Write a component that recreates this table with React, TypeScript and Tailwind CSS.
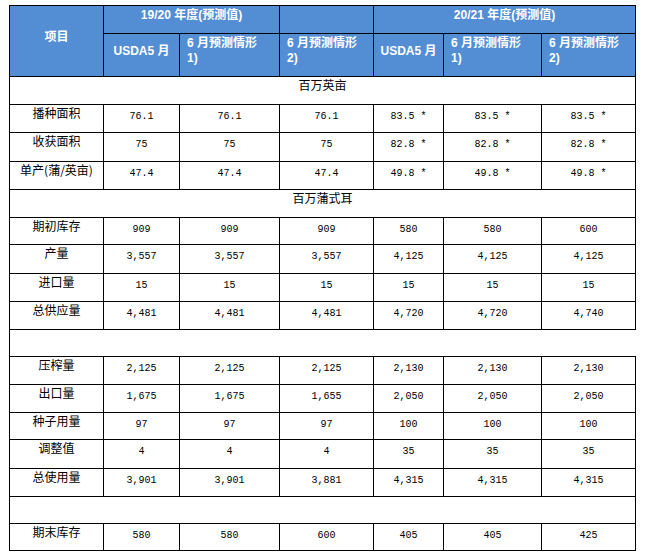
const head = "font-['Liberation_Sans','Noto_Sans_CJK_SC',sans-serif] font-bold text-[12px] leading-[15px] text-white"
const label = "font-['Noto_Sans_CJK_SC',sans-serif] text-[12px] leading-[16px] text-black"
const num = "font-['Liberation_Mono','DejaVu_Sans_Mono',monospace] text-[10px] leading-[16px] text-black"

type Row = { name: string; h: string; vals: string[] }

const acres: Row[] = [
  { name: '播种面积', h: 'h-[28px]', vals: ['76.1', '76.1', '76.1', '83.5 *', '83.5 *', '83.5 *'] },
  { name: '收获面积', h: 'h-[29px]', vals: ['75', '75', '75', '82.8 *', '82.8 *', '82.8 *'] },
  { name: '单产(蒲/英亩)', h: 'h-[28px]', vals: ['47.4', '47.4', '47.4', '49.8 *', '49.8 *', '49.8 *'] },
]

const supply: Row[] = [
  { name: '期初库存', h: 'h-[27px]', vals: ['909', '909', '909', '580', '580', '600'] },
  { name: '产量', h: 'h-[29px]', vals: ['3,557', '3,557', '3,557', '4,125', '4,125', '4,125'] },
  { name: '进口量', h: 'h-[28px]', vals: ['15', '15', '15', '15', '15', '15'] },
  { name: '总供应量', h: 'h-[28px]', vals: ['4,481', '4,481', '4,481', '4,720', '4,720', '4,740'] },
]

const usage: Row[] = [
  { name: '压榨量', h: 'h-[28px]', vals: ['2,125', '2,125', '2,125', '2,130', '2,130', '2,130'] },
  { name: '出口量', h: 'h-[28px]', vals: ['1,675', '1,675', '1,655', '2,050', '2,050', '2,050'] },
  { name: '种子用量', h: 'h-[27px]', vals: ['97', '97', '97', '100', '100', '100'] },
  { name: '调整值', h: 'h-[29px]', vals: ['4', '4', '4', '35', '35', '35'] },
  { name: '总使用量', h: 'h-[28px]', vals: ['3,901', '3,901', '3,881', '4,315', '4,315', '4,315'] },
]

const ending: Row = { name: '期末库存', h: 'h-[27px]', vals: ['580', '580', '600', '405', '405', '425'] }

function DataRow({ row }: { row: Row }) {
  return (
    <tr className={row.h}>
      <td className={`border border-black text-center align-top pt-0 whitespace-nowrap ${label}`}>{row.name}</td>
      {row.vals.map((v, i) => (
        <td key={i} className={`border border-black text-center align-top pt-[4px] whitespace-pre ${num}`}>
          {v}
        </td>
      ))}
    </tr>
  )
}

function UnitRow({ text, h }: { text: string; h: string }) {
  return (
    <tr className={h}>
      <td colSpan={7} className={`border border-black text-center align-top pt-0 ${label}`}>{text}</td>
    </tr>
  )
}

export default function App() {
  const th = `border border-black bg-[#538ed5] align-middle pb-[8px] ${head}`
  return (
    <div className="min-h-screen bg-white pl-[9px] pt-[5px]">
      <table className="table-fixed border-collapse w-[627px]">
        <colgroup>
          <col className="w-[94px]" />
          <col className="w-[76px]" />
          <col className="w-[100px]" />
          <col className="w-[94px]" />
          <col className="w-[70px]" />
          <col className="w-[98px]" />
          <col className="w-[94px]" />
        </colgroup>
        <thead>
          <tr className="h-[28px]">
            <th rowSpan={2} className={`${th} text-center`}>项目</th>
            <th colSpan={2} className={`${th} text-center`}>19/20 年度(预测值)</th>
            <th className={th}></th>
            <th colSpan={3} className={`${th} text-center`}>20/21 年度(预测值)</th>
          </tr>
          <tr className="h-[43px]">
            <th className={`${th} text-center`}>USDA5 月</th>
            <th className={`${th} text-left pl-[7px]`}>6 月预测情形<br />1)</th>
            <th className={`${th} text-left pl-[7px]`}>6 月预测情形<br />2)</th>
            <th className={`${th} text-center`}>USDA5 月</th>
            <th className={`${th} text-left pl-[7px]`}>6 月预测情形<br />1)</th>
            <th className={`${th} text-left pl-[7px]`}>6 月预测情形<br />2)</th>
          </tr>
        </thead>
        <tbody>
          <UnitRow text="百万英亩" h="h-[28px]" />
          {acres.map((r) => (
            <DataRow key={r.name} row={r} />
          ))}
          <UnitRow text="百万蒲式耳" h="h-[28px]" />
          {supply.map((r) => (
            <DataRow key={r.name} row={r} />
          ))}
          {/* spacer row, no right rule in the source */}
          <tr className="h-[27px]">
            <td colSpan={7} className="border border-black border-r-0"></td>
          </tr>
          {usage.map((r) => (
            <DataRow key={r.name} row={r} />
          ))}
          <tr className="h-[27px]">
            <td colSpan={7} className="border border-black"></td>
          </tr>
          <DataRow row={ending} />
        </tbody>
      </table>
    </div>
  )
}
